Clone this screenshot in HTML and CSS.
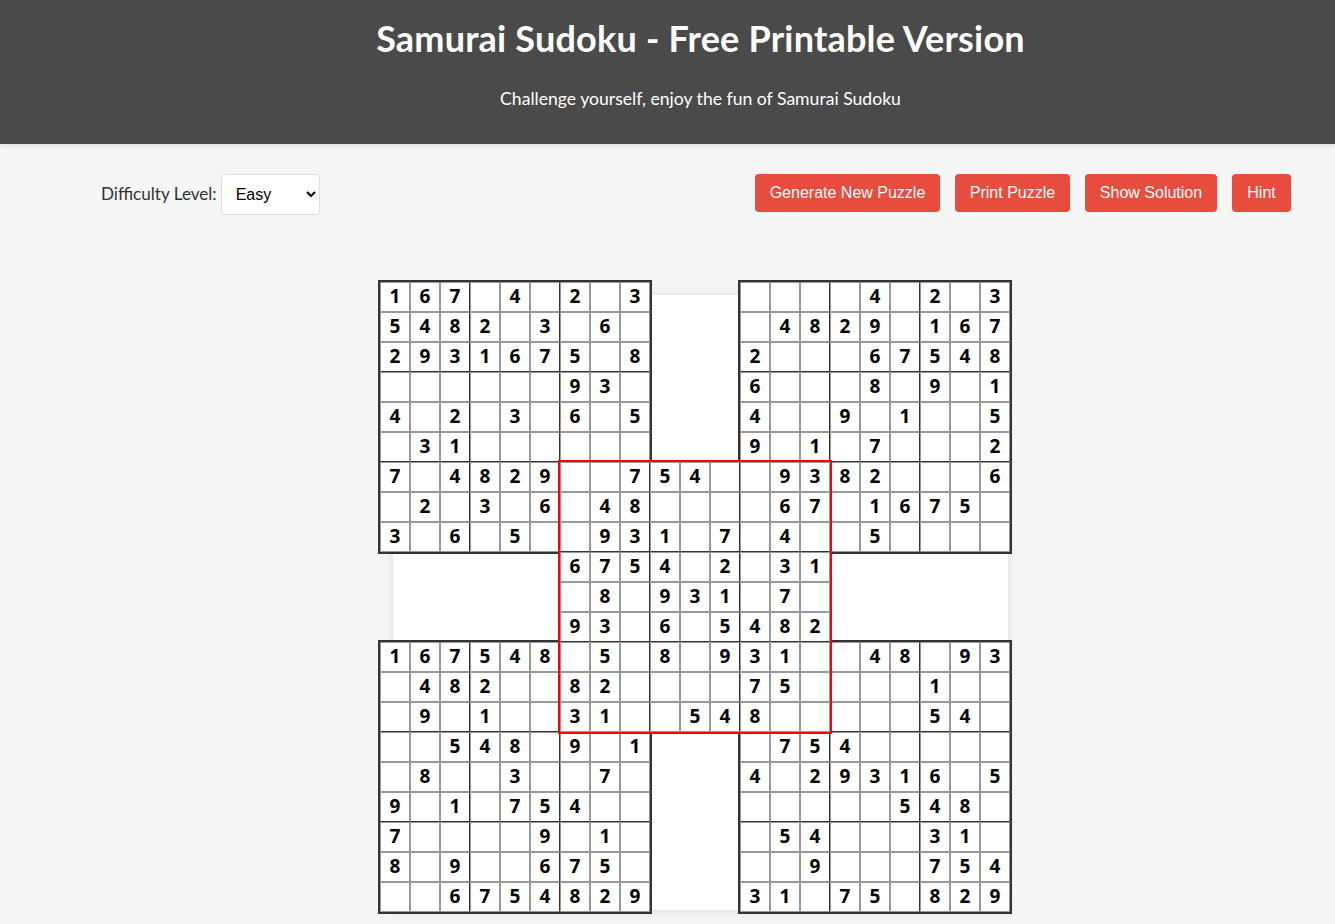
FILE: index.html
```html
<!DOCTYPE html>
<html lang="en">
<head>
  <meta charset="UTF-8">
  <meta name="viewport" content="width=device-width, initial-scale=1.0">
  <title>Samurai Sudoku - Free Printable Version</title>
  <link rel="stylesheet" href="styles.css">
</head>
<body>

<header class="site-header">
  <h1>Samurai Sudoku - Free Printable Version</h1>
  <p>Challenge yourself, enjoy the fun of Samurai Sudoku</p>
</header>

<div class="controls">
  <div class="difficulty">
    <label for="difficulty">Difficulty Level:</label>
    <select id="difficulty">
      <option>Easy</option>
      <option>Medium</option>
      <option>Hard</option>
    </select>
  </div>
  <div class="actions">
    <button>Generate New Puzzle</button>
    <button>Print Puzzle</button>
    <button>Show Solution</button>
    <button>Hint</button>
  </div>
</div>

<div class="board">
  <div class="grid top-left" data-cells="167.4.2.3 5482.3.6. 2931675.8 ......93. 4.2.3.6.5 .31...... 7.4829..7 .2.3.6.48 3.6.5..93"></div>
  <div class="grid top-right" data-cells="....4.2.3 .4829.167 2...67548 6...8.9.1 4..9.1..5 9.1.7...2 .9382...6 .67.1675. .4..5...."></div>
  <div class="grid bottom-left" data-cells="167548.5. .482..82. .9.1..31. ..548.9.1 .8..3..7. 9.1.754.. 7....9.1. 8.9..675. ..6754829"></div>
  <div class="grid bottom-right" data-cells="31..48.93 75....1.. 8.....54. .754..... 4.29316.5 .....548. .54...31. ..9...754 31.75.829"></div>
  <div class="grid center" data-cells="..754..93 .48....67 .931.7.4. 6754.2.31 .8.931.7. 93.6.5482 .5.8.931. 82....75. 31..548.."></div>
</div>

<script src="script.js"></script>
</body>
</html>
```

FILE: styles.css
```css
body {
  margin: 0;
  padding-bottom: 14px;
  font-family: "Lato", "Open Sans", sans-serif;
  background-color: #f5f5f5;
  color: #333;
}

.site-header {
  height: 144px;
  box-sizing: border-box;
  padding: 13px 0 0 66px;
  background-color: #4a4a4a;
  color: #fff;
  text-align: center;
  box-shadow: 0 2px 5px rgba(0, 0, 0, 0.1);
}

.site-header h1 {
  margin: 0 0 25px;
  font-size: 36px;
  line-height: 50px;
  font-weight: 700;
  letter-spacing: 0.2px;
}

.site-header p {
  margin: 0;
  font-size: 17.6px;
  line-height: 22px;
}

.controls {
  display: flex;
  justify-content: space-between;
  align-items: flex-start;
  padding: 30px 44px 0 101px;
}

.difficulty {
  display: flex;
  align-items: center;
  gap: 4px;
  font-size: 17.1px;
}

.difficulty label {
  padding-bottom: 2px;
}

.difficulty select {
  width: 99px;
  height: 41px;
  padding: 0 10px;
  background-color: #fff;
  border: 1px solid #ddd;
  border-radius: 4px;
  font-family: "Liberation Sans", Arial, sans-serif;
  font-size: 16px;
  color: #000;
}

.actions {
  display: flex;
  gap: 15px;
}

.actions button {
  height: 38px;
  padding: 0;
  background-color: #e74c3c;
  color: #fff;
  border: none;
  border-radius: 4px;
  font-family: "Liberation Sans", Arial, sans-serif;
  font-size: 16px;
  cursor: pointer;
}

.actions button:nth-child(1) { width: 185px; }
.actions button:nth-child(2) { width: 115px; }
.actions button:nth-child(3) { width: 132px; }
.actions button:nth-child(4) { width: 59px; }

/* white sheet, the five grids hang off it */
.board {
  position: relative;
  width: 615px;
  height: 615px;
  margin: 80px 0 0 393px;
  background-color: #fff;
  box-shadow: 0 0 10px rgba(0, 0, 0, 0.1);
}

.grid {
  position: absolute;
  display: grid;
  grid-template-columns: repeat(9, 30px);
  grid-auto-rows: 30px;
  background-color: #fff;
  border: 2px solid #333;
}

.top-left { left: -15px; top: -15px; }
.top-right { left: 345px; top: -15px; }
.bottom-left { left: -15px; top: 345px; }
.bottom-right { left: 345px; top: 345px; }

.center {
  left: 165px;
  top: 165px;
  border-color: #f00;
  z-index: 1;
}

.cell {
  display: flex;
  justify-content: center;
  align-items: center;
  box-sizing: border-box;
  padding-bottom: 2px;
  border: 1px solid #999;
  font-family: "Open Sans", sans-serif;
  font-size: 19px;
  font-weight: 700;
  color: #000;
}

.cell.box-right { border-right-color: #333; }
.cell.box-bottom { border-bottom-color: #333; }
```

FILE: script.js
```js
// fill every grid from its data-cells rows, "." is an empty cell
var grids = document.querySelectorAll('.grid');

for (var g = 0; g < grids.length; g++) {
  var values = grids[g].dataset.cells.split(' ').join('');

  for (var i = 0; i < 81; i++) {
    var cell = document.createElement('div');
    var col = i % 9;
    var row = Math.floor(i / 9);
    cell.className = 'cell';
    if (col === 2 || col === 5) cell.classList.add('box-right');
    if (row === 2 || row === 5) cell.classList.add('box-bottom');
    if (values[i] !== '.') cell.textContent = values[i];
    grids[g].appendChild(cell);
  }
}
```
